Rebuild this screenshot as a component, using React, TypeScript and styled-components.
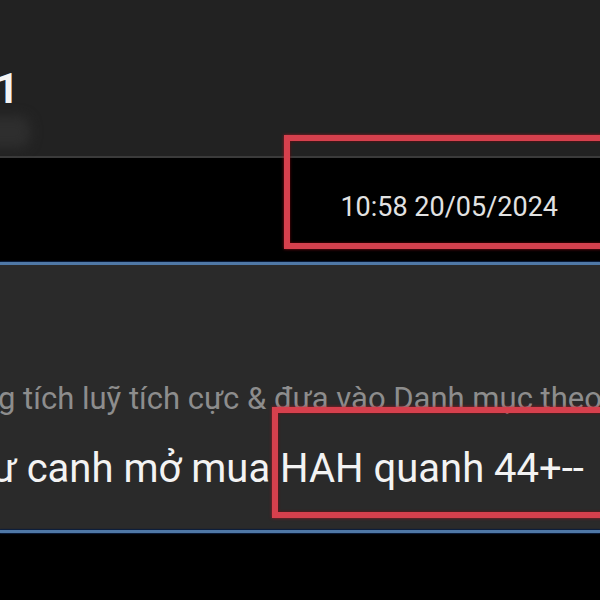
import React from "react";
import styled, { createGlobalStyle } from "styled-components";

const GlobalStyle = createGlobalStyle`
  html, body {
    margin: 0;
    padding: 0;
    background: #000;
  }
  body {
    width: 600px;
    height: 600px;
    overflow: hidden;
    font-family: Roboto, "Noto Sans", "Liberation Sans", sans-serif;
  }
`;

const Page = styled.div`
  position: relative;
  width: 600px;
  height: 600px;
  overflow: hidden;
  background: #000;
`;

const Header = styled.div`
  height: 158px;
  padding-top: 68px;
  box-sizing: border-box;
  display: flex;
  flex-direction: column;
  gap: 6px;
  background-color: #222222;
  border-bottom: 2px solid #3b3b3b;
`;

const Title = styled.div`
  margin-left: -5px;
  font-size: 42px;
  line-height: 42px;
  font-weight: 700;
  color: #f4f4f4;
  white-space: nowrap;
`;

const BlurredName = styled.div`
  margin-left: -20px;
  width: 50px;
  height: 32px;
  border-radius: 12px;
  background: #2e2e2e;
  filter: blur(6px);
`;

const TimeRow = styled.div`
  height: 104px;
  padding-top: 36px;
  padding-right: 42px;
  box-sizing: border-box;
  display: flex;
  justify-content: flex-end;
  background: #000;
`;

const TimeText = styled.span`
  font-size: 27px;
  line-height: 27px;
  color: #e2e2e2;
`;

const Divider = styled.div`
  height: 3px;
  background: #4f78a6;
  box-shadow: 0 -1px 1px #0b1d3d, 0 1px 1px #0b1d3d;
`;

const Message = styled.div`
  height: 265px;
  padding-top: 118px;
  box-sizing: border-box;
  background: #2a2a2a;
  display: flex;
  flex-direction: column;
  gap: 35px;
  overflow: hidden;
`;

const Line = styled.div<{ $size: number; $color: string; $shift: number }>`
  margin-left: ${(p) => p.$shift}px;
  font-size: ${(p) => p.$size}px;
  line-height: ${(p) => p.$size}px;
  color: ${(p) => p.$color};
  white-space: nowrap;
`;

const Highlight = styled.div<{ $left: number; $top: number; $height: number }>`
  position: absolute;
  left: ${(p) => p.$left}px;
  top: ${(p) => p.$top}px;
  width: ${(p) => 640 - p.$left}px;
  height: ${(p) => p.$height}px;
  box-sizing: border-box;
  border: 6px solid #d6404d;
  box-shadow: 0 0 3px rgba(190, 20, 35, 0.8), inset 0 0 3px rgba(140, 0, 10, 0.8);
  pointer-events: none;
`;

export default function App() {
  return (
    <>
      <GlobalStyle />
      <Page>
        <Header>
          <Title>1</Title>
          <BlurredName />
        </Header>
        <TimeRow>
          <TimeText>10:58 20/05/2024</TimeText>
        </TimeRow>
        <Divider />
        <Message>
          <Line $size={31} $color="#8d8d8d" $shift={-2}>
            g tích luỹ tích cực &amp; đưa vào Danh mục theo dõi
          </Line>
          <Line $size={40} $color="#f3f3f3" $shift={-8}>
            ư canh mở mua HAH quanh 44+--
          </Line>
        </Message>
        <Divider />
        <Highlight $left={284} $top={135} $height={114} />
        <Highlight $left={272} $top={407} $height={111} />
      </Page>
    </>
  );
}
